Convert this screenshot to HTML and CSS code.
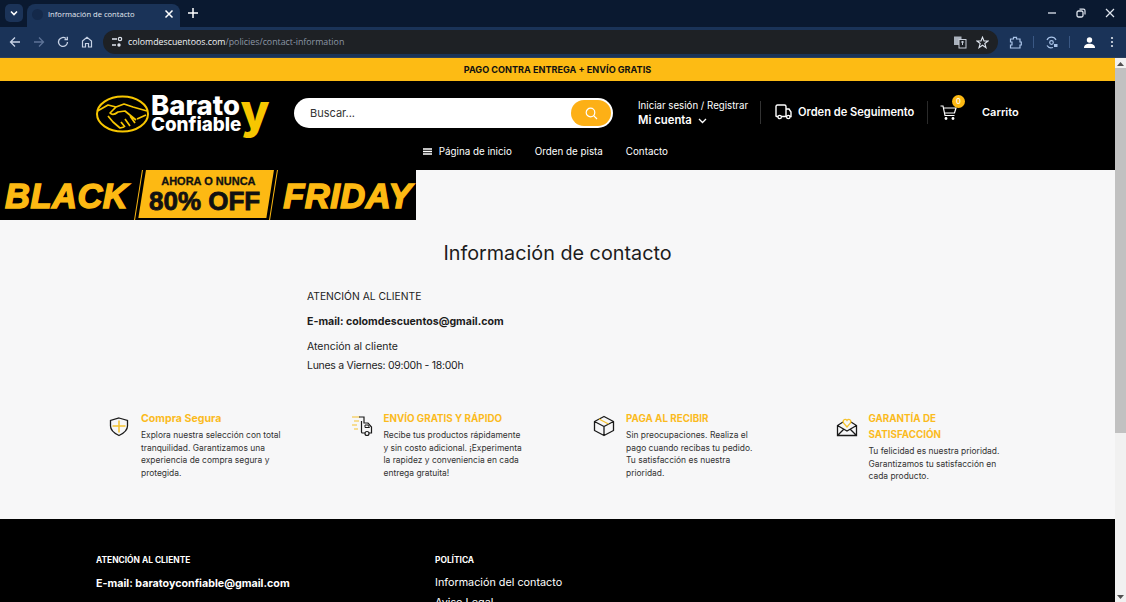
FILE: index.html
```html
<!doctype html>
<html lang="es">
<head>
    <meta charset="utf-8">
    <title>Información de contacto</title>
    <link rel="stylesheet" href="styles.css">
</head>
<body>

<!-- browser chrome -->
<div class="tabStrip">
    <span class="tabSearch">
        <svg width="10" height="10" viewBox="0 0 10 10"><path d="M2 3.500 5 6.500 8 3.500" fill="none" stroke="#fff" stroke-width="1.600"/></svg>
    </span>
    <div class="tab">
        <span class="favicon"></span>
        <span class="tabTitle">Información de contacto</span>
        <svg width="10" height="10" viewBox="0 0 10 10"><path d="M1.500 1.500 8.500 8.500M8.500 1.500 1.500 8.500" stroke="#fff" stroke-width="1.500"/></svg>
    </div>
    <svg class="newTab" width="10" height="10" viewBox="0 0 10 10"><path d="M5 0V10M0 5H10" stroke="#fff" stroke-width="1.500"/></svg>
    <div class="windowBtns">
        <svg width="10" height="10" viewBox="0 0 10 10"><path d="M1 5H9" stroke="#dfe5ee" stroke-width="1.300"/></svg>
        <svg width="10" height="10" viewBox="0 0 10 10"><rect x="1" y="3" width="6" height="6" rx="1.500" fill="none" stroke="#dfe5ee" stroke-width="1.300"/><path d="M3.500 1.200H7.500Q9 1.200 9 2.700V6.500" fill="none" stroke="#dfe5ee" stroke-width="1.200"/></svg>
        <svg width="10" height="10" viewBox="0 0 10 10"><path d="M1 1 9 9M9 1 1 9" stroke="#dfe5ee" stroke-width="1.200"/></svg>
    </div>
</div>
<div class="toolbar">
    <div class="navBtns">
        <svg width="12" height="12" viewBox="0 0 12 12"><path d="M11 6H1.500M6 1.500 1.500 6 6 10.500" fill="none" stroke="#c7d3e6" stroke-width="1.300"/></svg>
        <svg width="12" height="12" viewBox="0 0 12 12"><path d="M1 6H10.500M6 1.500 10.500 6 6 10.500" fill="none" stroke="#5d7397" stroke-width="1.300"/></svg>
        <svg width="12" height="12" viewBox="0 0 12 12"><path d="M10.500 6A4.500 4.500 0 1 1 9 2.600M10.300 0.800V3.600H7.500" fill="none" stroke="#c7d3e6" stroke-width="1.300"/></svg>
        <svg width="12" height="12" viewBox="0 0 12 12"><path d="M1.500 5 6 1.300 10.500 5V11H7.500V7.500H4.500V11H1.500Z" fill="none" stroke="#c7d3e6" stroke-width="1.200"/></svg>
    </div>
    <div class="urlBar">
        <span class="siteInfo">
            <svg width="12" height="12" viewBox="0 0 12 12"><path d="M1 3H6M1 9H5" stroke="#dfe5ee" stroke-width="1.300"/><circle cx="9" cy="3" r="1.700" fill="none" stroke="#dfe5ee" stroke-width="1.200"/><circle cx="8" cy="9" r="1.700" fill="#dfe5ee"/></svg>
        </span>
        <span class="url"><b>colomdescuentoos.com</b>/policies/contact-information</span>
        <svg class="urlIcon" width="14" height="14" viewBox="0 0 14 14"><rect x="1" y="1.500" width="7.500" height="8.500" fill="#aab2bd"/><rect x="6" y="4.500" width="7" height="8.500" fill="#1e2125" stroke="#c5ccd6"/><path d="M8 7H11M9.500 6V10" stroke="#c5ccd6"/></svg>
        <svg class="urlIcon" width="13" height="13" viewBox="0 0 13 13"><path d="M6.500 1.200 8 5H12L8.800 7.500 10 11.600 6.500 9.200 3 11.600 4.200 7.500 1 5H5Z" fill="none" stroke="#dfe5ee" stroke-width="1.100"/></svg>
    </div>
    <div class="toolBtns">
        <svg width="13" height="13" viewBox="0 0 13 13"><path d="M1.500 3H4.500V1.300H7.500V3H11V6H12.300V9H11V12H1.500V9H3V6H1.500Z" fill="none" stroke="#a9c3e8" stroke-width="1.200"/></svg>
        <span class="toolSep"></span>
        <svg width="13" height="13" viewBox="0 0 13 13"><path d="M11 4A5 5 0 0 0 2 4M2 9.500A5 5 0 0 0 8 11.500" fill="none" stroke="#a9c3e8" stroke-width="1.200"/><circle cx="6.500" cy="6.500" r="1.800" fill="none" stroke="#a9c3e8" stroke-width="1.200"/><path d="M9 8H12.500V11H9Z" fill="#a9c3e8"/></svg>
        <span class="toolSep"></span>
        <span class="avatar">
            <svg width="13" height="13" viewBox="0 0 13 13"><circle cx="6.500" cy="4" r="2.700" fill="#fff"/><path d="M1 12C1 8.800 3.500 7.800 6.500 7.800S12 8.800 12 12Z" fill="#fff"/></svg>
        </span>
        <svg width="4" height="12" viewBox="0 0 4 12"><circle cx="2" cy="2" r="1.100" fill="#dfe5ee"/><circle cx="2" cy="6" r="1.100" fill="#dfe5ee"/><circle cx="2" cy="10" r="1.100" fill="#dfe5ee"/></svg>
    </div>
</div>

<!-- page -->
<div class="viewport">
    <div class="page">
        <div class="announce">PAGO CONTRA ENTREGA + ENVÍO GRATIS</div>

        <header class="siteHeader">
            <div class="headerTop">
                <a class="logo">
                    <svg width="54" height="38" viewBox="0 0 54 38">
                        <ellipse cx="26.500" cy="19" rx="25.500" ry="17.500" fill="none" stroke="#f7c600" stroke-width="2"/>
                        <path d="M1.500 16 12 10 20 12 28 9 37 12 51 16M20 12 14 18Q17 21 22 17L29 16 40 25M34 21 39 28M29 24 34 31M25 27 29 32M12 21 17 27 24 33 28 32M41 24 50 20" fill="none" stroke="#f7c600" stroke-width="1.700" stroke-linejoin="round"/>
                    </svg>
                    <span class="logoText">
                        <span class="logoBarato">Barato</span>
                        <span class="logoConfiable">Confiable</span>
                    </span>
                    <span class="logoY">y</span>
                </a>

                <form class="searchBox">
                    <span class="searchText">Buscar...</span>
                    <span class="searchBtn">
                        <svg width="13" height="13" viewBox="0 0 13 13"><circle cx="5.500" cy="5.500" r="4.300" fill="none" stroke="#fff" stroke-width="1.200"/><path d="M8.700 8.700 12 12" stroke="#fff" stroke-width="1.200"/></svg>
                    </span>
                </form>

                <div class="account">
                    <span class="accountLogin">Iniciar sesión / Registrar</span>
                    <span class="accountName">Mi cuenta
                        <svg width="9" height="6" viewBox="0 0 9 6"><path d="M1 1 4.500 4.500 8 1" fill="none" stroke="#fff" stroke-width="1.300"/></svg>
                    </span>
                </div>

                <div class="tracking">
                    <svg width="17" height="16" viewBox="0 0 17 16"><path d="M3 12.500H1.500Q1 12.500 1 12V2.500Q1 1 2.500 1H9.500Q11 1 11 2.500V12.500H6.500M11 5H14L16 8V12.500H14.800M11 12.500H12" fill="none" stroke="#fff" stroke-width="1.400"/><circle cx="4.700" cy="13" r="1.700" fill="none" stroke="#fff" stroke-width="1.300"/><circle cx="13.300" cy="13" r="1.700" fill="none" stroke="#fff" stroke-width="1.300"/></svg>
                    <span>Orden de Seguimento</span>
                </div>

                <div class="cart">
                    <span class="cartIcon">
                        <svg width="17" height="18" viewBox="0 0 17 18"><path d="M0.500 3H3L5 12.500H14.500M3.500 5H16L14.500 10H4.500" fill="none" stroke="#fff" stroke-width="1.200"/><circle cx="6" cy="15.500" r="1.400" fill="#fff"/><circle cx="13" cy="15.500" r="1.400" fill="#fff"/></svg>
                        <span class="cartBadge">0</span>
                    </span>
                    <span class="cartLabel">Carrito</span>
                </div>
            </div>

            <nav class="mainNav">
                <a class="navHome">
                    <svg width="9" height="7" viewBox="0 0 9 7"><path d="M0 1H9M0 3.500H9M0 6H9" stroke="#fff" stroke-width="1.300"/></svg>
                    Página de inicio
                </a>
                <a>Orden de pista</a>
                <a>Contacto</a>
            </nav>
        </header>

        <div class="promoBanner">
            <span class="promoWord">BLACK</span>
            <div class="promoFrame">
                <div class="promoBox">
                    <span class="promoNow">AHORA O NUNCA</span>
                    <span class="promoOff">80% OFF</span>
                </div>
            </div>
            <span class="promoWord">FRIDAY</span>
        </div>

        <main class="content">
            <h1>Información de contacto</h1>
            <div class="contactText">
                <p class="contactHead">ATENCIÓN AL CLIENTE</p>
                <p class="contactMail">E-mail: colomdescuentos@gmail.com</p>
                <p>Atención al cliente<br><span class="contactHours">Lunes a Viernes: 09:00h - 18:00h</span></p>
            </div>
        </main>

        <section class="features">
            <div class="feature">
                <svg width="22" height="22" viewBox="0 0 22 22"><path d="M11 3 19.500 5.500V11Q19.500 16.500 11 20.500 2.500 16.500 2.500 11V5.500Z" fill="none" stroke="#1a1a1a" stroke-width="1.300"/><path d="M11 5.500V17.500M4.500 11H17.500" stroke="#f5c22e" stroke-width="1.500"/></svg>
                <div>
                    <h3>Compra Segura</h3>
                    <p>Explora nuestra selección con total<br>tranquilidad. Garantizamos una<br>experiencia de compra segura y<br>protegida.</p>
                </div>
            </div>
            <div class="feature">
                <svg width="22" height="22" viewBox="0 0 22 22"><path d="M1 2H9M3 6H8M1 10H6M3 14H7" stroke="#f5c22e" stroke-width="1.200"/><path d="M8 2H13V8H17L20.500 12V18H18M14 18H11.500Q10.500 18 10.500 17V6" fill="none" stroke="#1a1a1a" stroke-width="1.200"/><circle cx="16" cy="18.500" r="2" fill="none" stroke="#1a1a1a" stroke-width="1.200"/><path d="M14 10H17L18.500 12.500H14Z" fill="none" stroke="#1a1a1a"/></svg>
                <div>
                    <h3 class="caps">ENVÍO GRATIS Y RÁPIDO</h3>
                    <p>Recibe tus productos rápidamente<br>y sin costo adicional. ¡Experimenta<br>la rapidez y conveniencia en cada<br>entrega gratuita!</p>
                </div>
            </div>
            <div class="feature">
                <svg width="22" height="22" viewBox="0 0 22 22"><path d="M11 1.500 20.500 6.500V15.500L11 20.500 1.500 15.500V6.500Z M1.500 6.500 11 11.500 20.500 6.500M11 11.500V20.500" fill="none" stroke="#1a1a1a" stroke-width="1.300" stroke-linejoin="round"/><path d="M6 4 15.500 9" stroke="#f5c22e" stroke-width="1.300"/></svg>
                <div>
                    <h3 class="caps">PAGA AL RECIBIR</h3>
                    <p>Sin preocupaciones. Realiza el<br>pago cuando recibas tu pedido.<br>Tu satisfacción es nuestra<br>prioridad.</p>
                </div>
            </div>
            <div class="feature">
                <svg width="22" height="22" viewBox="0 0 22 22"><path d="M7 7 1.500 10.500V20.500H20.500V10.500L15 7M1.500 10.500 11 16 20.500 10.500M1.500 20.500 8 14M20.500 20.500 14 14" fill="none" stroke="#1a1a1a" stroke-width="1.300"/><path d="M11 12 7.500 8Q6.500 5.500 8.500 4.500 10 4 11 5.500 12 4 13.500 4.500 15.500 5.500 14.500 8Z" fill="none" stroke="#f5c22e" stroke-width="1.300"/></svg>
                <div>
                    <h3 class="caps">GARANTÍA DE<br>SATISFACCIÓN</h3>
                    <p>Tu felicidad es nuestra prioridad.<br>Garantizamos tu satisfacción en<br>cada producto.</p>
                </div>
            </div>
        </section>

        <footer class="siteFooter">
            <div class="footerCol">
                <h4>ATENCIÓN AL CLIENTE</h4>
                <p class="footerMail">E-mail: baratoyconfiable@gmail.com</p>
            </div>
            <div class="footerCol footerLinks">
                <h4>POLÍTICA</h4>
                <p>Información del contacto</p>
                <p>Aviso Legal</p>
            </div>
        </footer>
    </div>

    <div class="scrollbar">
        <svg width="7" height="4" viewBox="0 0 7 4"><path d="M0 4 3.500 0 7 4Z" fill="#505050"/></svg>
        <span class="scrollThumb"></span>
        <svg width="7" height="4" viewBox="0 0 7 4"><path d="M0 0 3.500 4 7 0Z" fill="#505050"/></svg>
    </div>
</div>

</body>
</html>
```

FILE: styles.css
```css
html, body {
    margin: 0;
    height: 602px;
    overflow: hidden;
}

body {
    font-family: Inter, "Noto Sans", Arial, sans-serif;
    background-color: #f7f7f8;
    color: #1c1c1c;
    display: flex;
    flex-direction: column;
}

p, h1, h3, h4 {
    margin: 0;
}

/* browser chrome */
.tabStrip {
    height: 27px;
    flex: none;
    background-color: #0a1930;
    display: flex;
    align-items: center;
    box-sizing: border-box;
    padding-left: 5px;
}

.tabSearch {
    width: 18px;
    height: 18px;
    margin-bottom: 1px;
    border-radius: 5px;
    background-color: #1b3358;
    display: flex;
    align-items: center;
    justify-content: center;
}

.tab {
    width: 153px;
    height: 23px;
    align-self: flex-end;
    margin-left: 4px;
    box-sizing: border-box;
    padding: 0 6px 3px 5px;
    background-color: #1a3358;
    border-radius: 8px 8px 0 0;
    display: flex;
    align-items: center;
    color: #e4e9f1;
    font-size: 7.6px;
    font-family: "Open Sans", Arial, sans-serif;
}

.favicon {
    width: 11px;
    height: 11px;
    border-radius: 50%;
    background-color: #14294a;
    margin-right: 5px;
}

.tabTitle {
    flex: 1;
}

.newTab {
    margin-left: 8px;
    margin-bottom: 1px;
}

.windowBtns {
    margin-left: auto;
    display: flex;
    gap: 19px;
    padding-right: 11px;
    margin-bottom: 1px;
}

.toolbar {
    height: 30px;
    flex: none;
    background-color: #1a3358;
    display: flex;
    align-items: center;
    box-sizing: border-box;
}

.navBtns {
    display: flex;
    gap: 12px;
    padding-left: 9px;
    width: 103px;
    box-sizing: border-box;
}

.urlBar {
    width: 895px;
    height: 24px;
    border-radius: 12px;
    background-color: #1e2125;
    display: flex;
    align-items: center;
    box-sizing: border-box;
    padding: 0 9px 0 6px;
    font-size: 8.8px;
    font-family: "Open Sans", Arial, sans-serif;
    color: #8d97a5;
}

.siteInfo {
    width: 16px;
    height: 16px;
    display: flex;
    align-items: center;
    justify-content: center;
    margin-right: 3px;
}

.url {
    flex: 1;
}

.url b {
    font-weight: 400;
    color: #f0f3f7;
}

.urlIcon {
    margin-left: 9px;
}

.toolBtns {
    display: flex;
    align-items: center;
    padding-left: 11px;
}

.toolSep {
    width: 1px;
    height: 12px;
    background-color: #3a5884;
    margin: 0 11px;
}

.avatar {
    width: 16px;
    height: 16px;
    display: flex;
    align-items: center;
    justify-content: center;
    margin-right: 12.5px;
}

/* page */
.viewport {
    flex: 1;
    min-height: 0;
    display: flex;
    border-top: 1px solid #2b3f5e;
}

.page {
    width: 1115px;
    flex: none;
    overflow: hidden;
}

.announce {
    height: 23px;
    background-color: #fdbb14;
    color: #111;
    font-size: 9.1px;
    font-weight: 700;
    text-align: center;
    line-height: 24px;
}

.siteHeader {
    height: 89px;
    background-color: #000;
    color: #fff;
}

.headerTop {
    display: flex;
    align-items: center;
    padding-left: 96px;
    height: 62px;
}

.logo {
    display: flex;
    align-items: center;
    width: 198px;
    flex: none;
    margin-top: 3px;
}

.logoText {
    display: flex;
    flex-direction: column;
    margin-left: 1px;
    font-weight: 800;
    line-height: 1;
}

.logoBarato {
    font-size: 27.5px;
    line-height: 21px;
}

.logoConfiable {
    font-size: 18.8px;
    line-height: 17px;
}

.logoY {
    color: #f7c600;
    font-size: 47px;
    font-weight: 800;
    line-height: 30px;
    margin-top: -6px;
    margin-left: -1px;
}

.searchBox {
    width: 319px;
    height: 30px;
    flex: none;
    margin: 2px 0 0 0;
    box-sizing: border-box;
    background-color: #fff;
    border-radius: 15px;
    display: flex;
    align-items: center;
    justify-content: space-between;
    padding: 0 2px 0 16px;
    font-size: 11px;
    color: #333;
}

.searchBtn {
    width: 40px;
    height: 26px;
    border-radius: 13px;
    background-color: #fdb016;
    display: flex;
    align-items: center;
    justify-content: center;
}

.account {
    width: 122px;
    height: 28px;
    margin: 2px 0 0 25px;
    flex: none;
    display: flex;
    flex-direction: column;
    font-size: 9.7px;
    line-height: 14px;
    white-space: nowrap;
}

.accountName {
    font-size: 11.3px;
    font-weight: 600;
}

.accountName svg {
    margin-left: 3px;
}

.tracking {
    display: flex;
    align-items: center;
    gap: 6px;
    width: 168px;
    height: 23px;
    flex: none;
    padding-left: 14px;
    box-sizing: border-box;
    font-size: 11.1px;
    font-weight: 600;
    white-space: nowrap;
    border-left: 1px solid #333;
    border-right: 1px solid #2a2a2a;
}

.cart {
    display: flex;
    align-items: center;
    padding-left: 12px;
    font-size: 11px;
    font-weight: 600;
}

.cartIcon {
    position: relative;
    display: flex;
    width: 42px;
}

.cartBadge {
    position: absolute;
    left: 12px;
    top: -8px;
    width: 13px;
    height: 13px;
    border-radius: 50%;
    background-color: #fdb913;
    font-size: 7.5px;
    font-weight: 500;
    text-align: center;
    line-height: 13px;
}

.mainNav {
    display: flex;
    justify-content: center;
    gap: 23px;
    padding: 2px 24px 0 0;
    font-size: 9.8px;
    line-height: 14px;
}

.navHome svg {
    margin-right: 4px;
}

/* promo banner */
.promoBanner {
    width: 416px;
    height: 50px;
    background-color: #000;
    display: flex;
    align-items: center;
    justify-content: space-between;
    box-sizing: border-box;
    padding: 0 4px 0 5px;
    overflow: hidden;
}

.promoWord {
    color: #fdb913;
    font-family: "Liberation Sans", Arial, sans-serif;
    font-size: 34.5px;
    font-weight: 700;
    font-style: italic;
    -webkit-text-stroke: 1.5px #fdb913;
    letter-spacing: 0.5px;
    margin-top: 3px;
}

.promoFrame {
    width: 136px;
    height: 50px;
    box-sizing: border-box;
    padding: 0 3px;
    border-left: 1.5px solid #fdb913;
    border-right: 1.5px solid #fdb913;
    transform: skewX(-9deg);
}

.promoBox {
    height: 48px;
    background-color: #fdb913;
    display: flex;
    flex-direction: column;
    align-items: center;
    color: #111;
    font-family: "Liberation Sans", Arial, sans-serif;
    font-weight: 700;
    padding-top: 4px;
    box-sizing: border-box;
}

.promoNow {
    font-size: 11px;
    line-height: 14px;
    transform: skewX(9deg);
    -webkit-text-stroke: 0.3px #111;
}

.promoOff {
    font-size: 26px;
    line-height: 27px;
    transform: skewX(9deg);
    -webkit-text-stroke: 0.8px #111;
}

/* contact text */
.content {
    height: 176px;
    box-sizing: border-box;
    padding-top: 21px;
}

h1 {
    font-size: 19.8px;
    font-weight: 400;
    line-height: 24px;
    text-align: center;
}

.contactText {
    padding: 22px 0 0 307px;
    font-size: 10.5px;
    line-height: 19px;
}

.contactHead {
    font-size: 10.3px;
}

.contactMail {
    font-weight: 700;
    margin: 6px 0;
    font-size: 10.6px;
}

.contactHours {
    letter-spacing: -0.28px;
}

/* features */
.features {
    display: grid;
    grid-template-columns: repeat(4, 242.5px);
    height: 123px;
    padding: 15px 0 0 108px;
    box-sizing: border-box;
}

.feature {
    display: flex;
    gap: 11px;
    align-items: flex-start;
}

.feature svg {
    flex: none;
    margin-top: 4px;
}

.feature h3 {
    color: #fbbb1e;
    font-size: 10.6px;
    font-weight: 700;
    line-height: 16px;
    margin-bottom: 2px;
}

.feature h3.caps {
    font-size: 9.8px;
}

.feature p {
    color: #333;
    font-size: 8.45px;
    line-height: 12.7px;
}

/* footer */
.siteFooter {
    height: 90px;
    background-color: #000;
    color: #fff;
    display: flex;
    padding: 34px 0 0 96px;
    box-sizing: border-box;
}

.footerCol {
    width: 339px;
    font-size: 10.8px;
    line-height: 20px;
}

.siteFooter h4 {
    font-size: 8.4px;
    font-weight: 700;
    line-height: 14px;
    margin-bottom: 7px;
}

.footerLinks h4 {
    margin-bottom: 6px;
}

.footerMail {
    font-weight: 700;
    font-size: 10.7px;
}

/* scrollbar */
.scrollbar {
    flex: 1;
    background-color: #f1f1f1;
    display: flex;
    flex-direction: column;
    align-items: center;
    padding: 4px 0 3px;
    box-sizing: border-box;
}

.scrollThumb {
    width: 100%;
    height: 365px;
    margin-top: 2px;
    margin-bottom: auto;
    background-color: #c1c1c1;
}
```
